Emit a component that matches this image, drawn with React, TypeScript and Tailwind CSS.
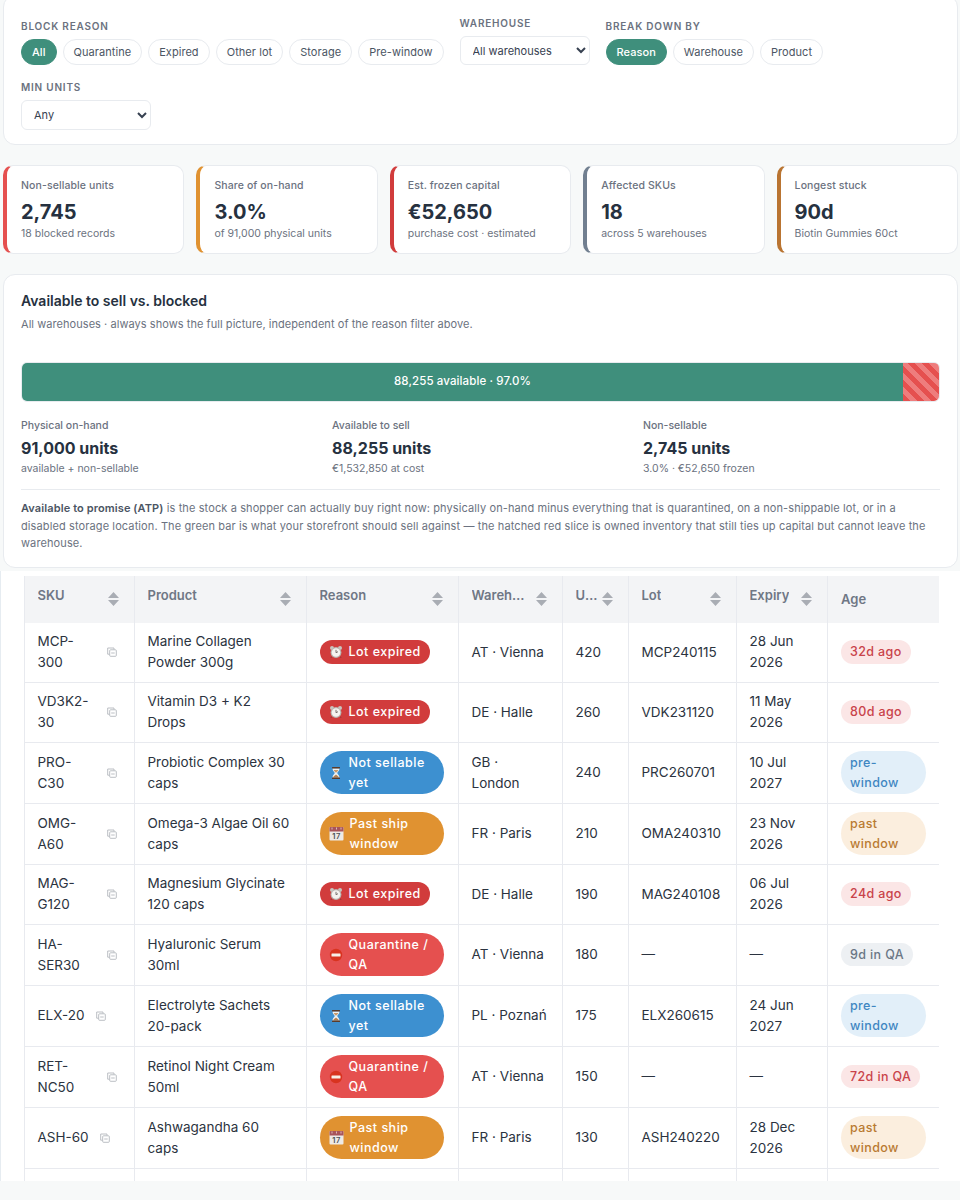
import React from 'react';

type Reason = 'expired' | 'pre' | 'past' | 'qa';
type AgeTone = 'red' | 'blue' | 'amber' | 'gray';

interface Row {
  sku: string;
  product: string;
  reason: Reason;
  warehouse: string;
  units: number;
  lot: string;
  expiry: string;
  age: string;
  tone: AgeTone;
}

const rows: Row[] = [
  { sku: 'MCP-300', product: 'Marine Collagen Powder 300g', reason: 'expired', warehouse: 'AT · Vienna', units: 420, lot: 'MCP240115', expiry: '28 Jun 2026', age: '32d ago', tone: 'red' },
  { sku: 'VD3K2-30', product: 'Vitamin D3 + K2 Drops', reason: 'expired', warehouse: 'DE · Halle', units: 260, lot: 'VDK231120', expiry: '11 May 2026', age: '80d ago', tone: 'red' },
  { sku: 'PRO-C30', product: 'Probiotic Complex 30 caps', reason: 'pre', warehouse: 'GB · London', units: 240, lot: 'PRC260701', expiry: '10 Jul 2027', age: 'pre-window', tone: 'blue' },
  { sku: 'OMG-A60', product: 'Omega-3 Algae Oil 60 caps', reason: 'past', warehouse: 'FR · Paris', units: 210, lot: 'OMA240310', expiry: '23 Nov 2026', age: 'past window', tone: 'amber' },
  { sku: 'MAG-G120', product: 'Magnesium Glycinate 120 caps', reason: 'expired', warehouse: 'DE · Halle', units: 190, lot: 'MAG240108', expiry: '06 Jul 2026', age: '24d ago', tone: 'red' },
  { sku: 'HA-SER30', product: 'Hyaluronic Serum 30ml', reason: 'qa', warehouse: 'AT · Vienna', units: 180, lot: '—', expiry: '—', age: '9d in QA', tone: 'gray' },
  { sku: 'ELX-20', product: 'Electrolyte Sachets 20-pack', reason: 'pre', warehouse: 'PL · Poznań', units: 175, lot: 'ELX260615', expiry: '24 Jun 2027', age: 'pre-window', tone: 'blue' },
  { sku: 'RET-NC50', product: 'Retinol Night Cream 50ml', reason: 'qa', warehouse: 'AT · Vienna', units: 150, lot: '—', expiry: '—', age: '72d in QA', tone: 'red' },
  { sku: 'ASH-60', product: 'Ashwagandha 60 caps', reason: 'past', warehouse: 'FR · Paris', units: 130, lot: 'ASH240220', expiry: '28 Dec 2026', age: 'past window', tone: 'amber' },
];

const stats = [
  { label: 'Non-sellable units', value: '2,745', sub: '18 blocked records', border: 'border-l-[#e5504f]' },
  { label: 'Share of on-hand', value: '3.0%', sub: 'of 91,000 physical units', border: 'border-l-[#e09231]' },
  { label: 'Est. frozen capital', value: '€52,650', sub: 'purchase cost · estimated', border: 'border-l-[#d13c3c]' },
  { label: 'Affected SKUs', value: '18', sub: 'across 5 warehouses', border: 'border-l-[#717f90]' },
  { label: 'Longest stuck', value: '90d', sub: 'Biotin Gummies 60ct', border: 'border-l-[#b97431]' },
];

const onHand = [
  { label: 'Physical on-hand', value: '91,000 units', sub: 'available + non-sellable' },
  { label: 'Available to sell', value: '88,255 units', sub: '€1,532,850 at cost' },
  { label: 'Non-sellable', value: '2,745 units', sub: '3.0% · €52,650 frozen' },
];

// Emoji are drawn because no colour emoji font is installed
function ClockGlyph() {
  return (
    <svg viewBox="0 0 14 14" className="h-[14px] w-[14px] shrink-0">
      <circle cx="3" cy="3" r="2" fill="#c9c4bf" />
      <circle cx="11" cy="3" r="2" fill="#c9c4bf" />
      <path d="M3 11.5 1.8 13M11 11.5l1.2 1.5" stroke="#8f3b3b" strokeWidth="1" />
      <circle cx="7" cy="7.5" r="5.4" fill="#b9b4b0" />
      <circle cx="7" cy="7.5" r="4.3" fill="#f5f3f0" />
      <path d="M7 4.8v2.9l2-1" fill="none" stroke="#6d6460" strokeWidth="0.9" />
    </svg>
  );
}

function HourglassGlyph() {
  return (
    <svg viewBox="0 0 14 14" className="h-[14px] w-[14px] shrink-0">
      <path d="M3.500 2.200h7c0 3-2.200 3.600-2.200 4.800s2.200 1.800 2.200 4.800h-7c0-3 2.200-3.600 2.200-4.800S3.500 5.200 3.500 2.200Z" fill="#eef2f5" />
      <path d="M4.700 4h4.600C9 5.400 7.600 6 7 6.800 6.400 6 5 5.400 4.700 4Z" fill="#c69a6c" />
      <path d="M4.300 11.500C4.700 9.800 6 9.600 7 8.600c1 1 2.300 1.200 2.700 2.900Z" fill="#b5814f" />
      <rect x="3" y="1" width="8" height="1.500" rx="0.500" fill="#5b3b2a" />
      <rect x="3" y="11.500" width="8" height="1.500" rx="0.500" fill="#5b3b2a" />
    </svg>
  );
}

function CalendarGlyph() {
  return (
    <svg viewBox="0 0 15 15" className="h-[15px] w-[15px] shrink-0">
      <rect x="0.500" y="1" width="14" height="13.500" rx="1" fill="#eeeae6" />
      <path d="M.5 2a1 1 0 0 1 1-1h12a1 1 0 0 1 1 1v3.500H.5Z" fill="#a8545a" />
      <path d="M3 1.500v2M7.500 1.500v2M12 1.500v2" stroke="#e9d9d6" strokeWidth="0.800" />
      <text x="7.500" y="12.800" textAnchor="middle" fontSize="7.500" fontWeight="600" fill="#4b4f55" fontFamily="Inter, sans-serif">17</text>
    </svg>
  );
}

function NoEntryGlyph() {
  return (
    <svg viewBox="0 0 14 14" className="h-[14px] w-[14px] shrink-0">
      <circle cx="7" cy="7" r="6.200" fill="#d8331f" />
      <rect x="2.500" y="5.600" width="9" height="2.800" rx="0.500" fill="#f7ede6" />
    </svg>
  );
}

const reasonStyles: Record<Reason, { label: string; bg: string; icon: React.ReactNode }> = {
  expired: { label: 'Lot expired', bg: 'bg-[#d13c3c]', icon: <ClockGlyph /> },
  pre: { label: 'Not sellable yet', bg: 'bg-[#3d90d0]', icon: <HourglassGlyph /> },
  past: { label: 'Past ship window', bg: 'bg-[#e09231]', icon: <CalendarGlyph /> },
  qa: { label: 'Quarantine / QA', bg: 'bg-[#e5504f]', icon: <NoEntryGlyph /> },
};

const toneStyles: Record<AgeTone, string> = {
  red: 'bg-[#fbe6e6] text-[#c9434a]',
  blue: 'bg-[#e2eff9] text-[#3f86c2]',
  amber: 'bg-[#fbeede] text-[#b97a32]',
  gray: 'bg-[#edf0f3] text-[#6b7785]',
};

function Label({ children }: { children: React.ReactNode }) {
  return (
    <div className="mb-[6px] text-[10px] leading-[13px] font-semibold tracking-[0.08em] text-[#6b7280] uppercase">
      {children}
    </div>
  );
}

function Chip({ label, active }: { label: string; active?: boolean }) {
  return (
    <span
      className={
        active
          ? 'flex h-[26px] items-center rounded-full border border-[#3f8f7c] bg-[#3f8f7c] px-[10px] text-[11px] font-medium tracking-[0.005em] text-white'
          : 'flex h-[26px] items-center rounded-full border border-[#e8ebef] bg-white px-[10px] text-[11px] tracking-[0.005em] text-[#4b5563]'
      }
    >
      {label}
    </span>
  );
}

function CopyIcon() {
  return (
    <span className="flex h-[16px] w-[16px] shrink-0 items-center justify-center">
      <svg viewBox="0 0 10 10" className="h-[10px] w-[10px]" fill="none" stroke="#b4b8bd" strokeWidth="0.900">
        <path d="M7 2.500V1H.700v6.200H2.500" />
        <rect x="2.700" y="2.800" width="6.600" height="6.500" rx="0.800" />
        <path d="M4.200 6h3.500" />
      </svg>
    </span>
  );
}

function SortHead({ label, width }: { label: string; width: string }) {
  return (
    <th className={`${width} border-r border-[#e8eaef] pr-[15px] pl-[12.5px] text-left align-middle font-semibold`}>
      <div className="flex items-center justify-between gap-[4px]">
        <span className="mb-[7px] min-w-0 truncate">{label}</span>
        <svg viewBox="0 0 11 14" className="h-[14px] w-[11px] shrink-0" fill="#a9adb4">
          <path d="M5.500 0 11 6H0ZM5.500 14 0 8h11Z" />
        </svg>
      </div>
    </th>
  );
}

const cell = 'border-r border-b border-[#e8eaef] pr-[14px] pl-[12.5px] py-[8.5px] align-middle';

export default function App() {
  return (
    <div className="flex h-[1200px] flex-col overflow-hidden bg-[#f7f9f9] font-['Inter',sans-serif] text-[#263140]">
      <div className="flex flex-col gap-5 pr-[2px] pl-[3px]">
        {/* Filters */}
        <div className="-mt-[5px] flex flex-wrap items-end gap-x-4 gap-y-[16px] rounded-xl border border-[#e8ebef] bg-white px-[17px] pt-[21px] pb-[14px]">
          <div>
            <Label>Block reason</Label>
            <div className="flex gap-[6px]">
              <Chip label="All" active />
              <Chip label="Quarantine" />
              <Chip label="Expired" />
              <Chip label="Other lot" />
              <Chip label="Storage" />
              <Chip label="Pre-window" />
            </div>
          </div>
          <div>
            <Label>Warehouse</Label>
            <select className="h-[29px] w-[130px] rounded-md border border-[#e8ebef] bg-white pl-[8px] text-[11px] text-[#374151]">
              <option>All warehouses</option>
            </select>
          </div>
          <div>
            <Label>Break down by</Label>
            <div className="flex gap-[6px]">
              <Chip label="Reason" active />
              <Chip label="Warehouse" />
              <Chip label="Product" />
            </div>
          </div>
          <div className="w-full">
            <Label>Min units</Label>
            <select className="h-[30px] w-[130px] rounded-md border border-[#e8ebef] bg-white pl-[8px] text-[11px] text-[#374151]">
              <option>Any</option>
            </select>
          </div>
        </div>

        {/* Stats */}
        <div className="grid grid-cols-5 gap-3">
          {stats.map((s) => (
            <div key={s.label} className={`h-[89px] rounded-[10px] border border-l-4 border-[#e8ebef] bg-white pt-[13px] pl-[14px] ${s.border}`}>
              <div className="text-[10.5px] leading-[14px] font-medium tracking-[0.01em] text-[#6b7280]">{s.label}</div>
              <div className="mt-[4.5px] text-[20px] leading-[28px] font-bold">{s.value}</div>
              <div className="mt-[1.5px] text-[10.5px] leading-[14px] text-[#6b7280]">{s.sub}</div>
            </div>
          ))}
        </div>

        {/* On-hand split */}
        <div className="rounded-xl border border-[#e8ebef] bg-white px-[17px] pt-[16px] pb-[14px]">
          <div className="text-[14px] leading-[20px] font-semibold">Available to sell vs. blocked</div>
          <div className="mt-[6px] text-[11px] leading-[14px] tracking-[0.005em] text-[#6b7280]">
            All warehouses · always shows the full picture, independent of the reason filter above.
          </div>
          <div className="mt-[31px] flex h-[40px] overflow-hidden rounded-md border border-[#e8ebef]">
            <div className="flex flex-1 items-center justify-center bg-[#3f8f7c] text-[11.5px] font-medium tracking-[0.01em] text-white">
              88,255 available · 97.0%
            </div>
            <div className="w-[36px] bg-[repeating-linear-gradient(45deg,#e5504f_0,#e5504f_5px,#ee7d7d_5px,#ee7d7d_10px)]" />
          </div>
          <div className="mt-[17px] grid grid-cols-3 gap-x-[14px]">
            {onHand.map((s) => (
              <div key={s.label}>
                <div className="text-[10.5px] leading-[14px] font-medium text-[#6b7280]">{s.label}</div>
                <div className="mt-[4px] text-[16px] leading-[22px] font-bold">{s.value}</div>
                <div className="mt-[3px] text-[10.5px] leading-[14px] text-[#6b7280]">{s.sub}</div>
              </div>
            ))}
          </div>
          <p className="mt-[13px] border-t border-[#e8ebef] pt-[10px] text-[11px] leading-[17.5px] tracking-[0.01em] text-[#6b7280]">
            <strong className="font-semibold text-[#4b5563]">Available to promise (ATP)</strong> is the stock a shopper can actually buy right now: physically on-hand minus everything that is quarantined, on a non-shippable lot, or in a disabled storage location. The green bar is what your storefront should sell against — the hatched red slice is owned inventory that still ties up capital but cannot leave the warehouse.
          </p>
        </div>
      </div>

      {/* Table */}
      <div className="mt-[3px] h-[610px] overflow-hidden border-l border-[#e6ecf1] bg-white pt-[5px] pr-[22px] pl-[23px]">
        <table className="w-[914px] table-fixed border-separate border-spacing-0 border-l border-[#e8eaef] text-[13.5px] leading-[21px] text-[#2b3340]">
          <thead>
            <tr className="h-[47px] bg-[#f3f4f6] text-[13px] text-[#6f7785]">
              <SortHead label="SKU" width="w-[110px]" />
              <SortHead label="Product" width="w-[172px]" />
              <SortHead label="Reason" width="w-[152px]" />
              <SortHead label="Warehouse" width="w-[104px]" />
              <SortHead label="Units" width="w-[66px]" />
              <SortHead label="Lot" width="w-[108px]" />
              <SortHead label="Expiry" width="w-[91px]" />
              <th className="w-[111px] px-[13px] text-left align-middle font-semibold">Age</th>
            </tr>
          </thead>
          <tbody>
            {rows.map((r) => {
              const reason = reasonStyles[r.reason];
              return (
                <tr key={r.sku}>
                  <td className={cell}>
                    <div className="flex items-center gap-[8px]">
                      <span>{r.sku}</span>
                      <CopyIcon />
                    </div>
                  </td>
                  <td className={cell}>{r.product}</td>
                  <td className={cell}>
                    <span className={`flex w-fit items-center gap-[6px] rounded-full px-[9px] py-[2px] text-[12.5px] leading-[19.5px] font-medium tracking-[0.04em] text-white ${reason.bg}`}>
                      {reason.icon}
                      <span>{reason.label}</span>
                    </span>
                  </td>
                  <td className={cell}>{r.warehouse}</td>
                  <td className={cell}>{r.units}</td>
                  <td className={cell}>{r.lot}</td>
                  <td className={cell}>{r.expiry}</td>
                  <td className="border-b border-[#e8eaef] px-[13px] py-[8.5px] align-middle">
                    <span className={`block w-fit rounded-full px-[9px] py-[2px] text-[12.5px] leading-[19.5px] font-medium tracking-[0.03em] ${toneStyles[r.tone]}`}>
                      {r.age}
                    </span>
                  </td>
                </tr>
              );
            })}
            <tr className="h-[60px]">
              <td className={cell} />
              <td className={cell} />
              <td className={cell} />
              <td className={cell} />
              <td className={cell} />
              <td className={cell} />
              <td className={cell} />
              <td className="border-b border-[#e8eaef]" />
            </tr>
          </tbody>
        </table>
      </div>
    </div>
  );
}
